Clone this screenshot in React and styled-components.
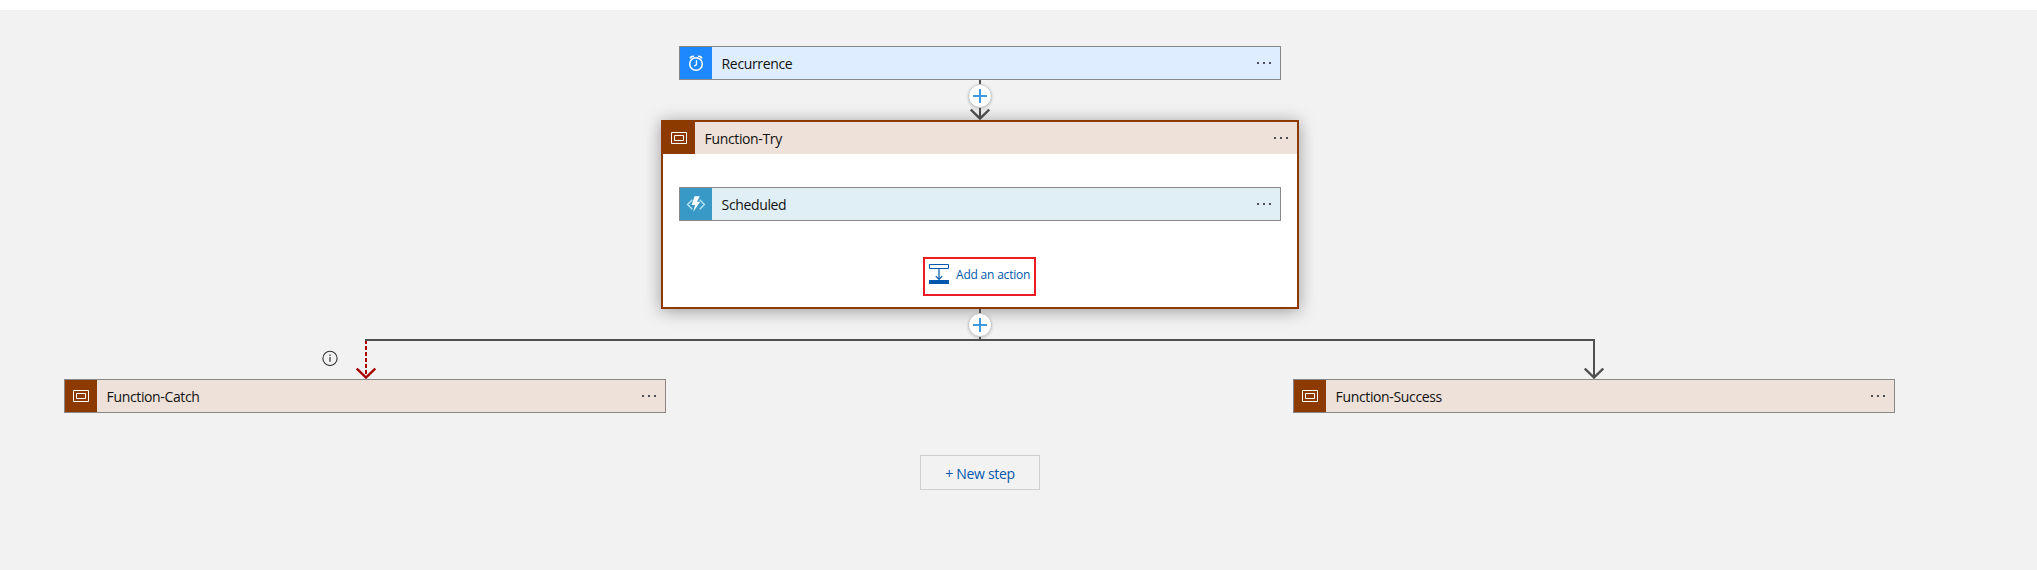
import React from 'react';
import styled, { createGlobalStyle } from 'styled-components';

const GlobalStyle = createGlobalStyle`
  *, *::before, *::after { box-sizing: border-box; }
  body { margin: 0; background: #fff; }
  svg { display: block; flex: none; }
`;

const Canvas = styled.main`
  margin-top: 10px;
  height: 560px;
  padding-top: 36px;
  background: #f2f2f2;
  overflow: hidden;
  font-family: 'Open Sans', 'Noto Sans', sans-serif;
`;

const Flow = styled.div`
  width: 1960px;
  display: flex;
  flex-direction: column;
  align-items: center;
`;

const Card = styled.section`
  display: flex;
  align-items: stretch;
  width: 602px;
  height: 34px;
  border: 1px solid #8a8886;
  background: ${(p) => p.$fill};
`;

const IconTile = styled.div`
  display: flex;
  align-items: center;
  justify-content: center;
  flex: none;
  width: 32px;
  height: 32px;
  background: ${(p) => p.$color};
`;

const Title = styled.span`
  flex: 1;
  padding-left: 9.6px;
  font-size: 14px;
  line-height: 34px;
  letter-spacing: -0.36px;
  white-space: nowrap;
  color: #111;
`;

const MenuButton = styled.button`
  display: flex;
  align-items: center;
  justify-content: center;
  width: 32px;
  height: 32px;
  padding: 0;
  border: 0;
  background: none;
`;

const Scope = styled.section`
  display: flex;
  flex-direction: column;
  align-items: center;
  width: 638px;
  height: 189px;
  border: 2px solid #8c3a00;
  background: #fff;
  box-shadow: 0 2px 16px rgba(0, 0, 0, 0.36);
`;

const ScopeHeader = styled.header`
  display: flex;
  width: 100%;
  height: 32px;
  margin-bottom: 33px;
  background: #eee1d9;
`;

const AddAction = styled.button`
  display: flex;
  gap: 7px;
  width: 113px;
  height: 39px;
  margin: 36px 1px 0 0;
  padding: 5px 0 0 4px;
  border: 2px solid #ed1c24;
  background: #fff;
  font-family: inherit;
  font-size: 12px;
  line-height: 22px;
  letter-spacing: -0.2px;
  white-space: nowrap;
  color: #0058ad;
`;

const Connector = styled.div`
  display: flex;
  flex-direction: column;
  align-items: center;
  height: ${(p) => p.$height}px;
`;

const Stem = styled.div`
  flex: none;
  width: 2px;
  height: ${(p) => p.$height}px;
  background: #505050;
`;

const InsertButton = styled.button`
  display: flex;
  align-items: center;
  justify-content: center;
  flex: none;
  width: 24px;
  height: 24px;
  padding: 0;
  border: 1px solid #c8c8c8;
  border-radius: 50%;
  background: #fff;
  box-shadow: 0 1px 3px rgba(0, 0, 0, 0.18);
`;

const Split = styled.div`
  display: flex;
  width: 1960px;
  height: 40px;
  padding-left: 322px;
`;

const Info = styled.div`
  width: 43px;
  padding-top: 11px;
`;

const Rail = styled.div`
  display: flex;
  justify-content: space-between;
  width: 1230px;
  border-top: 2px solid #505050;
`;

const RailEnd = styled.div`
  display: flex;
  justify-content: center;
  width: 2px;
`;

const Branches = styled.div`
  display: flex;
  gap: 627px;
  width: 1960px;
  padding-left: 64px;
`;

const NewStep = styled.button`
  width: 120px;
  height: 35px;
  margin-top: 42px;
  padding: 1px 0 0;
  border: 1px solid #cfcfcf;
  background: #f2f2f2;
  font-family: inherit;
  font-size: 14px;
  letter-spacing: -0.3px;
  color: #0058ad;
`;

const ClockIcon = () => (
  <svg width="18" height="18" viewBox="0 0 18 18" fill="none" stroke="#fff">
    <circle cx="9" cy="10" r="6.3" strokeWidth="1.5" />
    <path d="M9.5 6v4.6L7.2 12.3" strokeWidth="1.3" />
    <path d="M3 4.3Q4.2 2 7 2.3M15 4.3Q13.8 2 11 2.3" strokeWidth="1.7" />
  </svg>
);

const ScopeIcon = () => (
  <svg width="16" height="12" viewBox="0 0 16 12" fill="none" stroke="#fff">
    <path d="M.5.5h15v11H.5zM3.5 3.5h9v5h-9z" />
  </svg>
);

const FunctionIcon = () => (
  <svg width="20" height="18" viewBox="0 0 20 18">
    <path d="M6.3 4.8L1.6 9.5l4.7 4.7M13.7 4.8l4.7 4.7-4.7 4.7" fill="none" stroke="#b9e2f3" strokeWidth="1.4" />
    <path d="M8.6 1.2h5.2L11 6.7h3.2L7.2 17l1.9-7H5.6z" fill="#fff" />
  </svg>
);

const PlusIcon = () => (
  <svg width="14" height="14" viewBox="0 0 14 14">
    <path d="M7 0v14M0 7h14" stroke="#0078d4" strokeOpacity=".75" strokeWidth="2" />
  </svg>
);

const InsertBelowIcon = () => (
  <svg width="20" height="20" viewBox="0 0 20 20" fill="none" stroke="#0058ad">
    <path d="M.5.5h19v4H.5z" />
    <path d="M10 5v10.5M6.8 12.2l3.2 3.3 3.2-3.3" strokeWidth="1.2" />
    <path d="M0 18h20" strokeWidth="4" />
  </svg>
);

const DotsIcon = () => (
  <svg width="14" height="2" viewBox="0 0 14 2" fill="#4c4c55">
    <rect width="2" height="2" />
    <rect x="6" width="2" height="2" />
    <rect x="12" width="2" height="2" />
  </svg>
);

const InfoIcon = () => (
  <svg width="16" height="16" viewBox="0 0 16 16" fill="none" stroke="#333">
    <circle cx="8" cy="8.4" r="7.1" strokeWidth="1.1" />
    <path d="M8 7v4.8M8 4.6v1.3" strokeWidth="1.2" />
  </svg>
);

const ArrowIcon = ({ height, color = '#505050', dashed }) => (
  <svg width="20" height={height} viewBox={`0 0 20 ${height}`} fill="none" stroke={color} strokeWidth="2">
    <path d={`M10 0v${height - 1}`} strokeDasharray={dashed ? '4 2' : undefined} strokeDashoffset={dashed ? 1 : 0} />
    <path d={`M.8 ${height - 10.5}L10 ${height - 1.5}l9.2-9`} strokeWidth="2.4" />
  </svg>
);

const Menu = () => (
  <MenuButton aria-label="More options">
    <DotsIcon />
  </MenuButton>
);

const Step = ({ title, icon, color, fill }) => (
  <Card $fill={fill}>
    <IconTile $color={color}>{icon}</IconTile>
    <Title>{title}</Title>
    <Menu />
  </Card>
);

const Insert = () => (
  <InsertButton aria-label="Insert step">
    <PlusIcon />
  </InsertButton>
);

export default function App() {
  return (
    <>
      <GlobalStyle />
      <Canvas>
        <Flow>
          <Step title="Recurrence" icon={<ClockIcon />} color="#1e88ff" fill="#deedff" />
          <Connector $height={40}>
            <Stem $height={4} />
            <Insert />
            <ArrowIcon height={12} />
          </Connector>
          <Scope>
            <ScopeHeader>
              <IconTile $color="#8c3a00"><ScopeIcon /></IconTile>
              <Title>Function-Try</Title>
              <Menu />
            </ScopeHeader>
            <Step title="Scheduled" icon={<FunctionIcon />} color="#3999c6" fill="#e0eff6" />
            <AddAction>
              <InsertBelowIcon />
              Add an action
            </AddAction>
          </Scope>
          <Connector $height={30}>
            <Stem $height={4} />
            <Insert />
            <Stem $height={2} />
          </Connector>
          <Split>
            <Info><InfoIcon /></Info>
            <Rail>
              <RailEnd><ArrowIcon height={38} color="#a80000" dashed /></RailEnd>
              <RailEnd><ArrowIcon height={38} /></RailEnd>
            </Rail>
          </Split>
          <Branches>
            <Step title="Function-Catch" icon={<ScopeIcon />} color="#8c3a00" fill="#eee1d9" />
            <Step title="Function-Success" icon={<ScopeIcon />} color="#8c3a00" fill="#eee1d9" />
          </Branches>
          <NewStep>+ New step</NewStep>
        </Flow>
      </Canvas>
    </>
  );
}
